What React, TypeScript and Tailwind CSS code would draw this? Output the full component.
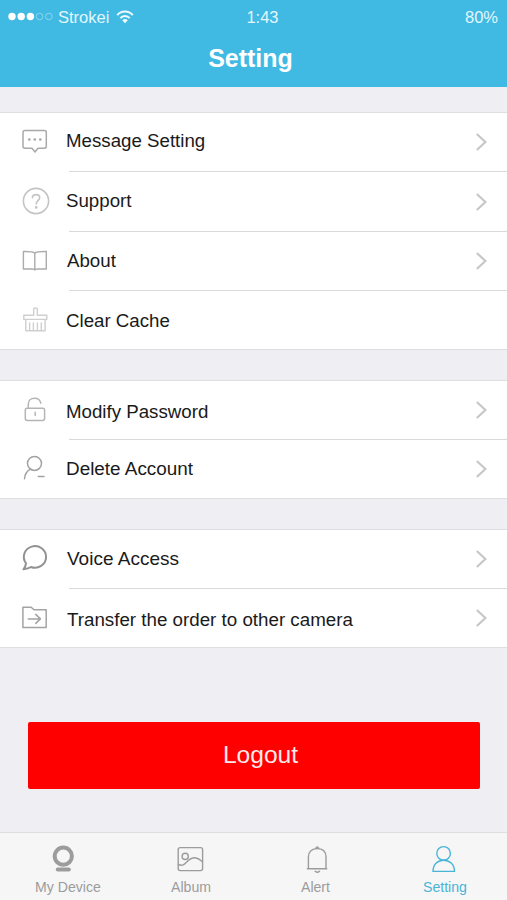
import type { ReactNode } from 'react';

type RowProps = {
  icon: ReactNode;
  label: string;
  height: string;
  text?: string;
  chevron?: boolean;
};

function Glyph({ children, color, width = 1.4 }: { children: ReactNode; color: string; width?: number }) {
  return (
    <svg
      width="32"
      height="32"
      viewBox="0 0 32 32"
      fill="none"
      stroke={color}
      strokeWidth={width}
      strokeLinecap="round"
      strokeLinejoin="round"
      className="shrink-0"
    >
      {children}
    </svg>
  );
}

const MessageIcon = (
  <Glyph color="#a9a9a9" width={1.5}>
    <path d="M6 4.6H25.4Q27.3 4.6 27.3 6.5V20.3Q27.3 22.2 25.4 22.2H19L16 26L13 22.2H6Q4 22.2 4 20.3V6.5Q4 4.6 6 4.6Z" />
    <g fill="#a6a6a6" stroke="none">
      <circle cx="10.3" cy="13.5" r="1.3" />
      <circle cx="15.8" cy="13.5" r="1.3" />
      <circle cx="21.3" cy="13.5" r="1.3" />
    </g>
  </Glyph>
);

const SupportIcon = (
  <Glyph color="#c4c4c4" width={1.6}>
    <circle cx="17" cy="15" r="12.6" />
    <path d="M13.4 11.8C13.4 9.6 15 8.6 17.1 8.6C19.2 8.6 20.7 9.7 20.7 11.6C20.7 14.3 17.3 14.6 17.3 18" />
    <circle cx="17.2" cy="21.4" r=".6" fill="#c4c4c4" />
  </Glyph>
);

const BookIcon = (
  <Glyph color="#ababab" width={1.4}>
    <path d="M15.8 8.2C14.4 6.7 11.2 6.4 4.4 6.5V24H13Q15.8 24 15.8 25.1Q15.8 24 18.7 24H27.3V6.5C20.5 6.4 17.2 6.7 15.8 8.2ZM15.8 8.2V24.7" />
  </Glyph>
);

const BrushIcon = (
  <Glyph color="#cfcfcf" width={1.4}>
    <path d="M4.8 15.4V11.3H14.7V5.2Q14.7 4 16 4Q18.3 4 18.3 5.2V11.3H27.8V15.4ZM6.8 15.6V26.8H26.1V15.6M10.6 19V26.5M14.4 19V26.5M18.4 19V26.5M22.3 19V26.5" />
  </Glyph>
);

const UnlockIcon = (
  <Glyph color="#b5b5b5" width={1.5}>
    <rect x="6.3" y="14.2" width="19.3" height="12.2" rx="1.8" />
    <path d="M9.3 13.9V10.3C9.3 6.6 11.8 4.2 15.5 4.2C18.5 4.2 21.2 5.9 21.8 9.2M16.2 18.2V21.4" />
  </Glyph>
);

const DeleteUserIcon = (
  <Glyph color="#a2a2a2" width={1.5}>
    <circle cx="15.5" cy="10.4" r="7" />
    <path d="M11.5 16.1C8 17.9 5.8 21.1 5.5 25.8M19.3 23.5H25" />
  </Glyph>
);

const VoiceIcon = (
  <Glyph color="#929292" width={2}>
    <path d="M7 20.3A11.1 10.8 0 1 1 12 24Q9.2 25.7 4.5 26.3Q6.6 23.6 7 20.3Z" />
  </Glyph>
);

const FolderIcon = (
  <Glyph color="#a3a3a3" width={1.5}>
    <path d="M3.9 25.6V5.2H12.2L15 7.8H27.2V25.6ZM9.2 16.9H21.3M16.8 12.4L21.4 16.9L16.8 21.4" />
  </Glyph>
);

function Row({ icon, label, height, text = 'text-[18.7px]', chevron = true }: RowProps) {
  return (
    <div className={`flex items-center pl-[19px] pr-[18px] ${height}`}>
      {icon}
      <span className={`ml-[15px] flex-1 whitespace-nowrap leading-6 text-[#1a1a1a] ${text}`}>{label}</span>
      {chevron && (
        <svg width="14" height="20" viewBox="0 0 14 20" fill="none" stroke="#c7c7ca" strokeWidth="2.2" className="shrink-0">
          <path d="M1.8 2L10.4 10L1.8 18" />
        </svg>
      )}
    </div>
  );
}

function Divider() {
  return <div className="ml-[69px] h-px bg-[#d9d9dc]" />;
}

function Tab({ label, children, width, active }: { label: string; children: ReactNode; width: string; active?: boolean }) {
  return (
    <div className={`flex shrink-0 flex-col items-center ${width} ${active ? 'text-[#49b4d8]' : 'text-[#9c9c9c]'}`}>
      <svg width="32" height="32" viewBox="0 0 32 32" fill="none" stroke="currentColor" strokeWidth="1.4" strokeLinecap="round" strokeLinejoin="round">
        {children}
      </svg>
      <span className="mt-1 whitespace-nowrap text-[14.1px] leading-4">{label}</span>
    </div>
  );
}

export default function App() {
  return (
    <div className="flex h-[900px] w-[507px] flex-col overflow-hidden bg-[#eeeef3] font-['Liberation_Sans',Arial,sans-serif]">
      <header className="h-[87px] shrink-0 bg-[#40b9e3] text-white">
        <div className="grid h-[33px] grid-cols-3 items-center pl-2 pr-[9px] text-[16.5px] leading-5 text-[#e2f7fd]">
          <div className="flex items-center">
            <svg width="46" height="10" viewBox="0 0 46 10">
              <g fill="#fff">
                <circle cx="4" cy="4.5" r="3.7" />
                <circle cx="13.2" cy="4.5" r="3.7" />
                <circle cx="22.4" cy="4.5" r="3.7" />
              </g>
              <g fill="none" stroke="#9bdcf1" strokeWidth=".8">
                <circle cx="31.6" cy="4.5" r="3.3" />
                <circle cx="40.9" cy="4.5" r="3.3" />
              </g>
            </svg>
            <span className="ml-[4px]">Strokei</span>
            <svg width="18" height="14" viewBox="0 0 18 14" fill="none" stroke="#effbff" strokeWidth="2" className="ml-[7px] shrink-0">
              <path d="M1.2 5.2C5.5 .4 12.5 .4 16.8 5.2M4.3 8.2C6.8 5.2 11.2 5.2 13.7 8.2" />
              <path d="M6.2 10.2Q9 7.8 11.8 10.2L9 13.2Z" fill="#effbff" stroke="none" />
            </svg>
          </div>
          <span className="pl-[19px] text-center">1:43</span>
          <span className="text-right">80%</span>
        </div>
        <h1 className="pr-[6px] pt-[10px] text-center text-[25px] font-bold leading-[30px]">Setting</h1>
      </header>

      <main className="flex-1">
        <section className="mt-[25px] h-[238px] border-y border-[#dedee2] bg-white">
          <Row icon={MessageIcon} label="Message Setting" height="h-[58px]" text="text-[18.7px] pb-[2px]" />
          <Divider />
          <Row icon={SupportIcon} label="Support" height="h-[59px]" text="text-[18.7px] pb-px" />
          <Divider />
          <Row icon={BookIcon} label="About" height="h-[58px]" text="text-[18.7px] pl-px" />
          <Divider />
          <Row icon={BrushIcon} label="Clear Cache" height="h-[58px]" text="text-[18.7px] pt-[2px]" chevron={false} />
        </section>

        <section className="mt-[30px] h-[119px] border-y border-[#dedee2] bg-white">
          <Row icon={UnlockIcon} label="Modify Password" height="h-[58px]" text="text-[18.7px] pt-[4px]" />
          <Divider />
          <Row icon={DeleteUserIcon} label="Delete Account" height="h-[58px]" text="text-[18.9px]" />
        </section>

        <section className="mt-[30px] h-[119px] border-y border-[#dedee2] bg-white">
          <Row icon={VoiceIcon} label="Voice Access" height="h-[58px]" text="text-[19px] pl-px" />
          <Divider />
          <Row icon={FolderIcon} label="Transfer the order to other camera" height="h-[58px]" text="text-[18.75px] pl-px pt-[3px]" />
        </section>

        <button className="ml-7 mt-[74px] flex h-[67px] w-[452px] items-center justify-center rounded-[2px] bg-[#fe0000] pb-px pl-[13px] pr-0 text-[24.6px] leading-7 text-[#ffeaea]">
          Logout
        </button>
      </main>

      <nav className="flex h-[68px] shrink-0 border-t border-[#dfdfe3] bg-[#f6f6f6] pl-[5px] pt-[10px]">
        <Tab label="My Device" width="w-[126px]">
          <g transform="translate(-4.7 0)">
            <circle cx="16" cy="13.2" r="8.6" strokeWidth="4" />
            <path d="M10.5 26.4H21.5" strokeWidth="4" />
          </g>
        </Tab>
        <Tab label="Album" width="w-[120px]">
          <rect x="3.2" y="4.6" width="24.4" height="23" rx="2" />
          <circle cx="10.2" cy="13.4" r="3.1" />
          <path d="M3.4 21.5C11 25 11.5 14.5 20 14.7C23.5 14.9 25.5 17 27.4 18.7" />
        </Tab>
        <Tab label="Alert" width="w-[129px]">
          <path d="M8.4 25.8V14C8.4 8.5 12 5.6 17.2 5.6C22.4 5.6 26 8.5 26 14V25.8ZM7.4 25.8H26.8M15.7 5.3Q17.2 2.8 18.9 5.3M15.2 28.2Q17.4 30.3 19.5 28.2" />
        </Tab>
        <Tab label="Setting" width="w-[130px]" active>
          <circle cx="14.6" cy="10.4" r="6.8" />
          <path d="M4 28.4C4 20.8 9 17.2 14.6 17.2C20.3 17.2 25.5 20.8 25.5 28.4Z" />
        </Tab>
      </nav>
    </div>
  );
}
